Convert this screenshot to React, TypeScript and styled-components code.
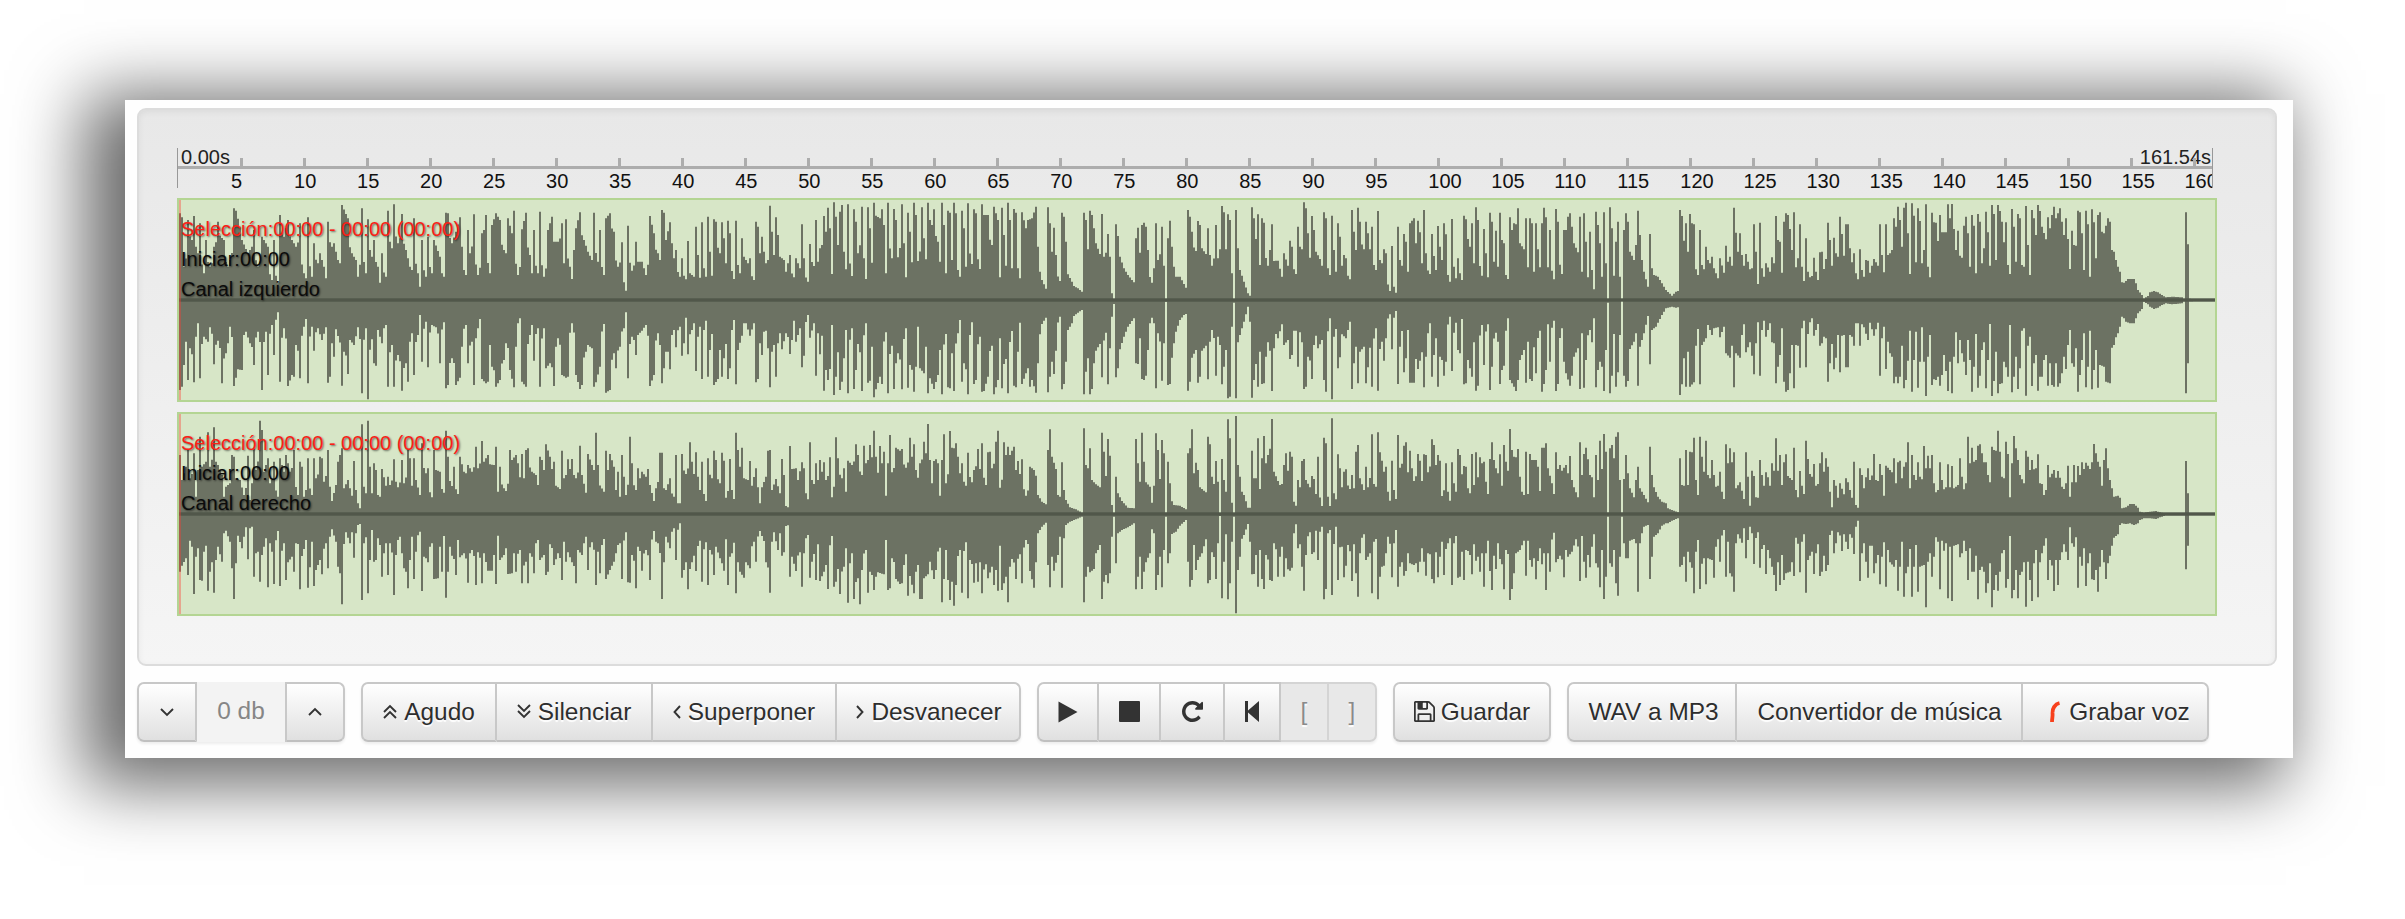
import React from 'react';
import styled, { createGlobalStyle, css } from 'styled-components';

const GlobalStyle = createGlobalStyle`
  body { margin: 0; background: #fff; }
  * { box-sizing: border-box; }
`;

const Page = styled.main`
  height: 919px;
  padding: 100px 112px 0 125px;
  overflow: hidden;
  font-family: "Liberation Sans", Arial, sans-serif;
`;

const Window = styled.section`
  height: 658px;
  padding: 8px 16px 0 12px;
  background: #fefefe;
  box-shadow: -24px 11px 66px 17px rgba(0, 0, 0, 0.58);
`;

const Well = styled.div`
  display: flex;
  flex-direction: column;
  gap: 10px;
  height: 558px;
  padding: 38px 0 0 38px;
  border: 2px solid #dcdcdc;
  border-radius: 9px;
  background: linear-gradient(#e8e8e8, #f5f5f5);
  box-shadow: inset 0 2px 6px rgba(0, 0, 0, 0.06);
`;

const Ruler = styled.div`
  display: grid;
  grid-template-columns: 100%;
  width: 2036px;
  height: 40px;
  overflow-x: clip;
  overflow-y: visible;
  border: solid #989898;
  border-width: 0 1px;
  font-size: 20px;
  line-height: 18px;
  color: #222;
  > * { grid-area: 1 / 1; }
`;

const RulerEnds = styled.div`
  display: flex;
  justify-content: space-between;
  height: 21px;
  padding: 0 1px 0 3px;
  border-bottom: 3px solid #adadad;
`;

const Marks = styled.div`
  display: flex;
  padding: 10px 0 0 53px;
`;

const Mark = styled.div`
  flex: 0 0 63.02px;
  color: #111;
  &::before {
    content: "";
    display: block;
    width: 3px;
    height: 10px;
    margin: 0 0 4px 9px;
    background: #adadad;
  }
`;

const Track = styled.div`
  display: grid;
  width: 2040px;
  height: 204px;
  border: 2px solid #b4d593;
  background: #d7e6c7;
  > * { grid-area: 1 / 1; }
`;

const Cursor = styled.div`
  width: 2px;
  background: rgba(255, 60, 50, 0.38);
`;

const Caption = styled.div`
  padding: 14px 0 0 2px;
  font-size: 20px;
  line-height: 30px;
  color: #0b0b0b;
  text-shadow: 1px 1px 2px rgba(0, 0, 0, 0.55);
`;

const Selection = styled.div`
  color: #fb2016;
`;

const Toolbar = styled.div`
  display: flex;
  gap: 16px;
  margin-top: 16px;
`;

const Group = styled.div`
  display: flex;
  height: 60px;
  border-radius: 7px;
  box-shadow: 0 2px 3px rgba(0, 0, 0, 0.07);
`;

const Button = styled.button<{ $w: number; $disabled?: boolean; $gap?: number; $indent?: number }>`
  display: flex;
  align-items: center;
  justify-content: center;
  gap: ${p => p.$gap ?? 7}px;
  width: ${p => p.$w}px;
  height: 60px;
  padding: 0 0 1px ${p => p.$indent ?? 0}px;
  border: 2px solid #c8c8c8;
  border-bottom-color: #c0c0c0;
  border-left-width: 0;
  background: linear-gradient(#fff, #e0e0e0);
  font: 24.4px "Liberation Sans", Arial, sans-serif;
  white-space: nowrap;
  color: #2e2e2e;
  text-shadow: 0 2px 1px #fff;
  &:first-child { border-left-width: 2px; border-radius: 7px 0 0 7px; }
  &:last-child { border-radius: 0 7px 7px 0; }
  &:only-child { border-radius: 7px; }
  ${p => p.$disabled && css`
    background: #e8e8e8;
    border-color: #d4d4d4;
    color: #8a8a8a;
  `}
`;

const Level = styled.div`
  width: 90px;
  border-right: 2px solid #c8c8c8;
  background: #f3f3f3;
  text-align: center;
  font-size: 24.4px;
  line-height: 57px;
  color: #868686;
`;

const Glyph = styled.svg`
  display: block;
  flex: none;
  fill: none;
  stroke: #333;
  stroke-width: 1.9;
`;

const Solid = styled(Glyph)`
  fill: #333;
  stroke: none;
`;

/* Peak outlines, four stretches per channel. Each stretch gives its first
   pixel, its zero level and "x,y" points at 2.8 x 3 units per pixel. */
type Stretch = { x0: number; zero: number; top: string; bottom: string };

const LEFT: Stretch[] = [
  {
    x0: 100, zero: 660,
    top: '222,400 229,412 236,560 247,420 256,480 263,408 272,520 280,430 290,580 297,480 306,560 320,500 330,425 345,480 358,560 376,385 381,392 393,440 400,480 412,520 424,500 431,450 443,560 455,470 470,500 480,600 487,480 497,610 504,405 515,470 525,420 537,480 548,500 559,430 570,580 576,595 583,412 594,590 600,490 610,550 615,520 626,560 632,595 638,425 650,500 655,490 668,540 672,550 678,375 694,415 705,520 716,540 723,590 734,385 744,580 750,418 762,530 768,480 778,560 784,608 790,520 800,590 807,392 818,505 823,373 835,490 845,402 857,510 866,560 873,570 879,415 890,580 896,620 902,480 912,590 918,470 929,580 935,480 950,530 963,590 969,398 974,400 985,490 997,455 1008,412 1014,500 1022,585 1030,450 1038,520 1047,403 1058,585 1069,460 1080,405 1092,580 1097,435 1108,400 1119,420 1131,510 1136,520 1143,415 1153,460 1159,392 1170,585 1181,448 1192,398 1203,525 1209,580 1215,450 1226,580 1232,395 1243,590 1254,450 1265,410 1271,485 1282,485 1293,430 1299,550 1305,418 1315,560 1321,597 1327,510 1333,445 1344,397 1355,480 1366,515 1378,540 1383,398 1394,545 1400,450 1411,585 1416,415 1428,400 1439,455 1450,515 1453,560 1462,487 1473,632 1479,437 1490,572 1500,485 1507,545 1518,545 1529,585 1540,408 1552,460 1563,520',
    bottom: '222,930 229,920 235,855 241,785 247,900 254,805 263,907 269,770 275,730 280,895 290,770 302,785 308,742 320,853 330,782 341,910 350,820 358,790 364,740 376,918 387,868 396,870 404,765 410,755 420,790 431,855 443,755 453,930 465,755 471,885 481,735 487,825 498,697 504,905 515,745 526,918 537,885 543,890 549,795 560,895 571,740 577,717 583,910 594,740 600,812 610,745 622,780 633,742 638,908 645,890 650,790 655,830 661,748 678,917 684,815 695,882 700,780 712,795 723,742 733,940 744,745 751,958 761,778 767,850 773,857 779,750 790,790 801,735 807,920 816,795 823,920 835,825 846,932 857,850 863,905 873,760 879,885 890,765 896,705 902,845 912,725 918,862 930,735 941,742 952,850 963,727 969,925 975,915 985,835 997,915 1008,893 1014,800 1023,735 1033,850 1042,785 1047,915 1058,745 1064,717 1069,897 1080,910 1085,905 1092,795 1098,860 1109,920 1120,900 1131,840 1137,790 1148,870 1159,922 1165,800 1176,715 1181,905 1193,920 1204,765 1209,735 1215,842 1226,745 1232,920 1243,745 1249,865 1260,850 1271,918 1281,775 1293,885 1305,893 1310,890 1321,730 1333,885 1344,927 1350,915 1360,815 1367,795 1378,805 1383,920 1389,907 1400,860 1411,732 1417,938 1428,930 1439,820 1445,865 1456,800 1467,745 1473,697 1479,895 1490,770 1501,825 1507,765 1518,752 1529,735 1540,918 1552,885 1563,760',
  },
  {
    x0: 660, zero: 360,
    top: '0,240 5,90 11,98 17,180 28,127 34,190 40,235 45,210 56,290 61,235 72,298 79,183 85,280 95,290 101,140 107,225 112,293 118,127 124,265 129,290 135,110 141,215 146,287 151,118 158,125 167,220 173,127 179,175 185,250 190,122 196,160 207,297 213,122 219,255 224,280 230,175 235,230 247,250 252,235 263,300 269,125 275,140 280,220 286,170 292,215 298,250 303,240 308,77 314,155 320,225 325,112 331,165 337,230 347,240 353,275 364,225 375,292 381,235 392,265 398,133 404,235 415,305 420,192 431,258 437,120 443,245 448,205 454,195 459,108 465,155 471,83 476,145 482,282 487,67 493,110 499,195 504,95 510,75 515,215 521,268 527,73 537,288 543,88 549,125 555,220 566,80 571,235 577,297 583,82 588,145 594,248 599,68 605,107 616,115 622,88 627,135 633,280 639,68 650,235 656,87 661,120 667,232 678,73 683,190 689,292 695,98 700,155 706,247 711,68 717,105 723,243 734,82 740,175 745,238 750,68 756,120 762,135 768,88 779,185 784,245 790,68 796,135 801,280 807,92 812,98 818,240 823,68 829,100 835,270 840,290 846,92 852,145 857,260 863,70 874,252 880,88 885,100 896,267 902,73 908,105 919,105 930,195 935,80 946,120 952,292 957,83 963,165 968,257 974,68 980,120 986,265 991,87 997,98 1003,265 1008,295 1014,97 1025,145 1031,120 1042,115 1053,80 1059,200 1064,275 1070,300 1082,326 1087,82 1092,130 1098,215 1104,143 1110,225 1120,303 1126,98 1131,110 1137,185 1143,283 1154,305 1160,318 1171,325 1183,335 1187,98 1192,120 1198,208 1204,92 1210,105 1216,145 1222,190 1233,222 1238,102 1244,230 1255,162 1261,230 1267,340 1272,358 1277,133 1283,168 1289,230 1300,265 1312,285 1328,307 1334,175 1339,143 1345,218 1351,135 1356,128 1362,140 1368,210 1378,308 1384,265 1390,130 1395,240 1406,140 1412,257 1417,358 1423,175 1429,122 1434,200 1440,260 1446,290 1457,290 1465,312 1475,323 1479,90 1485,110 1490,155 1501,213 1507,123 1513,135 1518,205 1530,222 1535,145 1541,225 1547,257 1558,135 1563,235',
    bottom: '0,495 5,610 11,565 17,515 23,515 28,568 34,465 40,450 45,502 56,440 61,527 67,490 73,413 79,523 90,450 96,430 101,573 107,470 112,440 118,597 124,450 129,422 135,590 141,510 146,462 151,615 163,597 167,510 173,590 179,535 185,492 190,597 196,565 202,450 207,420 213,613 219,510 230,467 235,430 241,430 252,467 263,430 269,607 275,597 280,490 286,525 292,455 298,452 303,505 308,622 314,515 320,495 325,590 331,490 337,460 342,508 353,460 364,522 370,480 375,422 381,485 392,445 398,562 404,527 415,405 420,473 431,430 437,587 443,460 448,523 454,467 459,632 465,570 471,600 476,567 482,435 487,645 493,590 499,517 504,630 510,605 515,535 521,450 527,640 537,445 543,627 549,570 555,492 566,633 577,430 583,608 588,602 594,500 599,652 605,628 616,590 622,612 633,457 639,640 650,497 656,627 661,550 667,520 678,628 689,445 695,623 700,555 711,635 717,560 723,440 728,565 740,580 745,500 750,640 756,595 768,627 779,585 784,510 790,643 801,462 807,622 812,625 818,520 823,633 835,460 840,420 846,605 852,550 857,568 863,643 874,427 880,612 885,600 896,470 902,635 908,633 919,590 930,497 935,643 946,600 952,475 957,625 968,537 974,640 986,453 991,617 997,622 1003,515 1008,428 1014,612 1025,580 1031,565 1036,620 1042,600 1053,638 1059,550 1064,463 1070,432 1082,413 1087,637 1092,590 1098,545 1104,582 1110,512 1120,410 1126,628 1131,612 1137,545 1143,450 1154,430 1160,408 1171,398 1183,390 1187,643 1192,575 1198,535 1204,643 1210,627 1216,550 1222,512 1233,492 1238,592 1249,458 1255,613 1261,505 1267,410 1272,372 1277,592 1283,565 1289,508 1300,470 1312,440 1328,415 1334,550 1339,552 1345,475 1351,597 1356,600 1362,587 1368,510 1378,413 1384,430 1390,625 1395,460 1406,602 1412,490 1417,365 1423,615 1429,612 1434,533 1440,490 1446,455 1457,420 1465,405 1475,402 1479,632 1485,605 1490,533 1501,510 1507,608 1513,590 1518,512 1530,497 1535,598 1541,485 1547,450 1558,587 1563,470',
  },
  {
    x0: 1220, zero: 360,
    top: '5,78 11,97 17,208 22,103 28,120 34,280 39,358 45,90 51,205 56,270 67,305 78,340 84,347 90,82 95,115 101,177 107,103 112,255 118,115 124,128 135,257 141,210 146,133 152,243 163,242 174,290 180,220 191,257 196,182 202,200 213,282 219,140 225,200 230,208 235,67 241,85 247,160 252,233 258,108 264,150 270,215 281,237 286,257 292,97 298,115 303,265 308,285 314,107 320,210 326,275 331,130 337,170 342,257 348,225 353,235 364,298 370,90 376,155 381,210 387,83 393,125 404,208 409,125 415,160 420,208 426,140 432,255 437,270 443,93 448,240 454,250 460,208 466,220 476,333 482,198 488,320 493,338 499,140 505,240 510,257 516,162 521,185 527,275 533,130 544,115 549,190 555,122 560,157 566,250 572,90 578,220 586,282 594,162 600,228 605,270 611,138 617,200 622,240 628,130 634,163 639,285 645,305 650,117 656,260 661,295 667,235 672,280 678,300 684,107 690,118 695,177 701,200 706,130 712,250 717,82 723,120 734,287 740,147 745,220 751,292 757,98 762,125 768,245 773,152 779,260 785,98 790,180 796,190 802,285 807,297 813,112 818,150 824,130 830,133 835,85 841,190 852,208 857,115 863,262 869,115 874,130 880,275 886,130 891,208 897,262 902,130 908,83 914,112 919,262 925,150 936,298 942,87 947,125 958,282 964,150 970,150 975,110 981,100 986,140 992,190 1003,217 1009,110 1014,275 1020,100 1025,185 1031,292 1037,155 1042,270 1048,328 1053,95 1059,135 1065,190 1070,290 1076,97 1081,250 1087,358 1093,82 1098,145 1104,287 1110,185 1115,125 1121,290 1126,358 1132,150 1138,100 1143,125 1149,215 1160,240 1166,195 1171,92 1177,165 1183,240 1188,275 1199,320 1205,162 1211,265 1217,285 1228,290 1240,310 1250,330 1265,347 1277,335 1284,333 1289,90 1294,108 1300,182 1306,130 1311,215 1317,102 1323,130 1328,133 1334,268 1339,285 1345,150 1351,255 1357,268 1362,200 1368,240 1373,250 1379,230 1385,265 1396,295 1402,235 1412,278 1418,197 1424,245 1430,230 1435,257 1440,83 1446,158 1452,215 1457,160 1463,225 1469,257 1475,222 1486,268 1491,265 1497,133 1502,215 1508,312 1513,128 1519,265 1524,290 1530,250 1541,275 1547,232 1552,250 1558,108 1564,180',
    bottom: '5,613 11,560 17,510 22,655 28,650 34,440 39,368 45,655 51,487 56,465 67,425 78,380 84,425 90,653 95,600 101,552 107,620 112,515 118,612 124,610 129,530 135,487 146,633 152,505 157,462 163,475 174,433 180,495 191,480 196,537 202,525 207,452 213,452 219,560 225,457 235,627 241,620 247,530 258,597 264,495 270,467 275,505 286,480 292,600 298,635 308,415 314,658 320,470 326,447 331,565 337,532 342,463 353,475 364,425 370,627 376,550 381,500 387,610 393,515 404,500 409,610 415,562 420,503 426,620 437,445 443,632 448,507 454,485 460,542 466,475 476,403 482,508 493,393 499,612 505,500 510,453 516,577 521,535 527,450 533,608 544,608 549,537 555,567 566,517 572,622 578,530 583,460 589,430 594,590 600,525 605,475 611,620 617,530 628,587 634,545 645,410 650,573 656,458 661,428 667,510 673,520 678,417 684,613 690,610 695,540 706,590 712,487 717,632 723,617 734,435 740,555 751,433 757,630 762,560 773,458 785,612 790,570 796,557 802,452 807,415 813,600 824,620 830,633 835,600 841,540 852,510 857,608 863,485 869,597 874,603 880,502 886,580 897,452 902,635 908,612 914,570 919,433 925,545 936,422 942,633 947,612 958,445 964,545 970,580 981,617 986,587 992,530 1003,505 1009,627 1014,460 1020,623 1025,540 1037,450 1042,487 1048,415 1053,622 1059,570 1065,545 1076,633 1081,510 1087,368 1093,640 1098,587 1104,462 1110,620 1115,577 1121,465 1126,360 1132,587 1138,620 1143,603 1149,507 1160,485 1166,460 1171,617 1177,500 1188,460 1199,408 1205,553 1211,450 1222,440 1240,405 1250,385 1265,380 1277,383 1284,382 1289,645 1294,613 1300,535 1306,620 1311,515 1317,620 1328,607 1334,497 1339,447 1345,613 1351,495 1362,475 1368,435 1379,465 1385,445 1396,442 1402,472 1412,440 1418,520 1430,533 1435,497 1440,622 1446,520 1457,533 1463,465 1469,433 1475,517 1486,487 1491,527 1497,583 1502,490 1508,427 1513,587 1519,450 1524,422 1530,470 1541,430 1547,487 1552,490 1558,610 1564,560',
  },
  {
    x0: 1780, zero: 660,
    top: '0,485 6,578 11,425 17,400 23,405 28,447 34,510 40,397 45,562 51,535 56,433 62,560 68,603 73,475 78,575 84,592 90,588 96,533 101,575 107,600 112,517 118,515 123,567 129,537 135,428 140,480 146,557 152,473 163,530 168,410 174,462 180,527 185,433 191,433 197,505 202,547 207,520 213,580 219,598 225,508 230,570 236,590 242,540 247,542 253,578 264,537 275,557 281,433 286,525 292,577 298,433 303,525 309,520 314,510 320,415 325,440 331,380 337,420 342,500 348,383 353,368 359,460 364,582 370,370 376,407 382,547 387,385 393,423 398,550 404,510 409,373 415,560 420,592 426,398 432,427 438,428 443,483 449,405 455,457 462,457 471,373 477,415 482,372 488,447 494,510 499,452 505,527 510,533 516,437 521,410 527,460 533,560 538,405 544,437 549,580 555,402 561,425 566,550 572,505 577,395 583,457 588,557 594,375 600,402 605,540 611,375 617,393 622,425 628,487 634,427 645,582 650,387 656,440 662,545 667,402 673,415 678,555 684,560 690,378 695,495 701,585 706,390 712,415 718,465 724,375 730,393 735,440 745,478 751,412 757,445 763,405 768,380 774,415 785,385 791,425 797,465 802,415 808,477 813,567 819,452 824,495 830,497 835,392 841,397 847,460 852,570 858,392 863,433 869,590 875,388 880,427 886,535 892,405 897,397 903,455 908,460 914,437 920,415 926,425 930,510 937,515 942,540 948,560 954,575 960,607 965,608 971,603 976,597 990,597 998,610 1005,630 1012,645 1020,656 1030,648 1038,637 1048,633 1060,637 1070,645 1083,652 1100,650 1125,652 1130,657 1134,657 1137,397 1142,493 1147,656 1160,658 1218,658',
    bottom: '0,825 6,745 11,905 17,935 23,930 28,880 34,795 40,925 45,795 51,797 56,863 62,745 68,722 73,862 78,762 84,727 90,715 96,767 101,750 107,732 112,797 118,790 123,770 129,775 135,905 140,850 146,792 152,868 157,833 163,765 168,877 174,767 180,765 185,862 191,862 197,765 202,770 207,797 213,730 219,730 225,797 230,733 236,742 247,780 253,728 264,767 275,728 281,887 286,775 292,740 298,867 303,785 309,820 314,830 320,910 325,890 331,910 337,890 342,797 348,925 353,900 359,842 364,752 370,935 376,840 382,755 387,923 393,845 398,742 404,845 409,948 415,830 420,765 426,915 432,898 438,900 443,890 449,917 455,885 460,825 466,873 471,933 477,845 482,940 488,830 494,757 499,850 505,780 510,820 516,845 521,885 527,780 533,840 538,935 544,860 549,762 555,923 561,887 566,810 572,787 577,925 583,840 588,732 594,948 600,903 605,815 611,940 617,912 622,910 628,845 634,862 639,890 645,735 650,937 656,890 662,830 667,927 673,865 678,752 684,745 690,947 695,797 701,770 706,918 712,850 718,825 724,932 730,890 735,890 741,840 745,825 751,917 757,850 763,915 768,920 774,850 780,920 785,910 791,880 797,830 802,867 808,795 813,750 819,850 824,860 830,805 835,935 841,885 847,840 852,760 858,922 863,860 869,752 875,928 880,870 886,810 892,923 897,855 908,860 914,905 925,910 930,803 937,795 942,772 948,760 954,740 960,710 965,715 971,725 980,730 990,730 998,715 1005,700 1012,687 1020,665 1030,673 1038,680 1048,687 1060,683 1070,675 1083,670 1100,673 1125,670 1130,664 1134,664 1137,940 1142,850 1147,664 1160,663 1218,663',
  },
];

const RIGHT: Stretch[] = [
  {
    x0: 160, zero: 342,
    top: '56,165 62,240 73,200 79,150 84,235 95,160 101,290 107,210 113,110 118,200 129,185 135,97 141,200 152,82 158,185 163,195 174,225 180,290 186,260 196,250 203,165 208,170 214,235 225,240 236,285 247,167 253,300 258,250 264,145 270,210 280,62 286,90 292,215 303,175 308,250 320,185 330,290 336,175 347,215 353,165 364,215 376,150 386,285 393,185 398,200 404,290 415,175 426,285 432,175 438,235 449,170 454,175 460,245 471,150 476,260 482,303 493,255 499,185 510,145 515,265 527,240 532,265 537,287 543,183 549,270 555,310 560,325 566,73 571,260 577,280 583,62 588,200 593,280 599,190 605,210 610,285 616,290 622,207 632,257 639,230 644,255 655,178 661,245 667,262 678,180 683,250 694,150 700,175 706,257 711,175 717,240 728,285 734,130 745,220 751,205 762,292 768,150 774,210 785,215 796,278 801,92 807,170 818,258 824,200 835,282 841,170 852,215 857,220 863,195 874,215 885,140 891,205 902,123 907,185 919,165 924,193 935,195 941,140 947,275 952,200 963,265 969,273 980,150 986,180 997,165 1003,190 1008,232 1014,162 1019,235 1025,150 1031,145 1042,215 1053,225 1059,255 1064,170 1070,180 1075,210 1081,133 1092,170 1098,207 1104,185 1109,257 1120,267 1126,152 1132,235 1143,178 1148,207 1154,177 1165,235 1176,137 1182,225 1193,278 1199,162 1210,195 1215,210 1221,98 1227,195 1243,275 1249,152 1255,210 1260,162 1272,200 1277,270 1283,215 1288,290 1294,165 1300,230 1305,285 1316,110 1322,190 1333,270 1339,205 1345,235 1350,215 1361,230 1367,207 1373,255 1384,303 1389,265 1400,158 1406,158 1412,265 1417,270 1428,235 1440,290 1445,165 1451,310 1456,310 1462,162 1473,222 1484,127 1490,185 1495,222 1501,157 1507,230 1513,270 1518,185 1529,303 1535,175 1546,235 1552,152 1557,180',
    bottom: '56,515 62,497 73,475 79,525 84,422 90,440 95,582 101,470 107,445 113,540 118,542 129,437 135,572 141,515 146,487 152,578 158,480 163,440 174,485 180,400 186,392 196,425 202,505 208,597 214,490 219,407 230,445 236,410 241,382 247,478 253,385 258,380 264,530 270,460 275,455 280,545 286,465 297,415 303,562 308,430 314,455 320,552 330,393 336,558 347,430 353,540 358,487 370,470 376,515 382,430 387,432 393,568 404,447 409,420 415,563 421,502 426,425 432,558 438,510 449,480 454,523 465,430 471,505 476,410 482,388 493,425 499,500 510,613 515,432 521,397 532,430 537,397 543,473 549,400 555,375 560,372 566,600 571,430 577,412 583,580 588,480 593,390 599,485 605,480 610,415 622,530 627,460 632,430 639,525 644,430 655,585 661,465 672,410 678,460 683,505 694,565 700,480 706,410 711,537 717,455 728,395 734,573 740,470 745,475 751,487 762,430 768,537 779,535 785,440 790,515 796,408 801,593 807,515 812,440 818,467 830,525 835,420 841,472 852,460 863,548 868,460 874,450 885,555 891,457 902,550 907,460 919,512 930,512 935,465 941,552 947,407 952,480 963,465 969,445 975,522 986,520 991,460 997,515 1008,450 1014,550 1025,485 1031,550 1036,460 1047,520 1053,430 1059,420 1064,480 1075,465 1081,525 1087,515 1092,433 1104,495 1115,460 1126,540 1132,425 1137,485 1143,457 1154,487 1165,550 1171,450 1182,465 1187,430 1193,410 1199,510 1210,427 1221,555 1227,455 1232,520 1243,417 1249,537 1260,510 1272,485 1283,435 1288,430 1294,537 1305,397 1311,547 1316,548 1322,465 1333,565 1339,440 1350,512 1361,450 1372,540 1384,393 1389,425 1395,430 1406,597 1412,487 1417,410 1428,445 1440,385 1445,480 1456,370 1462,533 1473,487 1479,568 1484,507 1495,467 1501,513 1513,422 1518,545 1529,427 1535,555 1540,450 1552,525 1557,440',
  },
  {
    x0: 720, zero: 342,
    top: '0,250 5,158 11,182 17,293 28,177 34,270 39,297 45,98 50,150 56,200 62,143 67,235 78,240 84,183 90,257 101,205 107,262 112,310 118,262 129,230 135,152 141,150 146,270 157,237 168,280 174,177 180,225 185,318 191,322 196,138 202,207 213,205 219,240 230,187 235,205 241,280 247,298 252,127 258,240 264,252 269,190 275,240 280,180 286,215 291,187 297,240 309,172 314,292 325,112 331,175 342,235 348,205 353,275 359,182 370,195 381,133 387,165 398,225 404,137 409,190 420,135 426,172 432,92 437,170 443,218 448,138 454,190 460,155 465,287 471,190 477,105 482,217 493,143 504,152 510,147 521,203 532,113 538,170 543,133 549,210 555,233 560,190 571,125 577,160 583,72 588,180 594,250 599,183 605,178 611,190 616,287 622,180 628,103 633,250 644,93 650,143 655,145 661,130 667,170 672,220 678,190 689,257 695,158 706,247 711,210 722,147 728,207 734,130 745,255 751,157 756,155 762,205 773,125 779,92 784,263 795,127 801,165 807,140 812,165 824,140 829,210 835,183 841,222 846,178 857,287 868,200 880,210 885,227 891,285 900,305 914,313 919,150 924,88 930,170 941,207 947,285 952,290 958,187 964,270 970,300 980,322 995,328 1014,338 1020,85 1025,195 1031,205 1037,145 1042,240 1053,253 1065,262 1070,98 1076,155 1081,228 1087,117 1093,167 1098,315 1104,340 1109,230 1115,280 1126,303 1140,323 1160,325 1165,117 1171,190 1176,245 1182,98 1188,185 1193,247 1204,260 1210,308 1216,257 1221,100 1227,150 1232,237 1238,120 1244,160 1249,338 1255,185 1261,250 1272,315 1289,317 1305,328 1311,160 1317,145 1322,88 1328,220 1333,188 1339,210 1344,262 1361,277 1367,110 1373,133 1378,230 1384,252 1389,183 1395,245 1400,340 1406,177 1412,240 1417,275 1423,58 1429,115 1434,308 1440,340 1445,48 1451,195 1456,230 1468,285 1479,323 1485,323 1490,152 1496,235 1501,235 1507,115 1513,267 1518,175 1524,108 1530,190 1535,165 1546,57 1552,215 1563,243',
    bottom: '0,475 5,490 11,512 17,418 22,555 28,470 34,460 39,428 45,580 50,487 56,515 67,533 73,487 84,505 96,425 101,485 112,393 123,423 129,487 141,578 146,425 152,397 163,450 168,400 174,467 180,457 185,378 191,376 196,530 202,470 213,513 224,457 230,560 235,460 247,405 252,533 258,485 264,462 269,540 275,433 280,543 291,515 297,495 303,567 314,408 320,560 325,545 331,507 337,582 348,500 353,445 359,608 364,490 370,460 376,597 387,535 393,613 398,510 409,450 415,578 420,515 432,570 437,530 443,517 460,523 465,420 471,570 477,565 482,475 493,537 504,552 510,550 515,495 521,463 527,587 532,528 543,580 549,515 555,495 560,597 566,597 571,535 583,523 588,485 599,537 605,510 616,443 622,607 628,537 633,450 639,540 644,600 650,545 655,617 661,555 672,450 678,578 689,427 695,595 700,480 711,548 717,490 722,545 728,487 734,580 745,493 751,535 762,500 768,555 773,510 779,572 784,437 790,570 801,530 807,607 812,500 818,477 829,537 840,463 846,550 857,420 863,432 868,513 880,563 885,487 891,400 900,380 914,368 919,495 924,562 930,470 935,512 947,465 952,410 958,563 964,415 970,375 980,365 995,358 1014,350 1020,607 1025,530 1031,500 1037,517 1048,507 1059,450 1065,435 1070,597 1076,545 1081,525 1087,550 1093,520 1098,410 1104,350 1109,490 1115,400 1126,390 1140,382 1160,370 1165,568 1171,530 1176,470 1182,567 1188,515 1193,487 1204,460 1210,388 1216,400 1221,570 1227,525 1232,470 1238,562 1244,450 1249,350 1255,490 1261,460 1266,402 1278,395 1289,377 1305,360 1311,485 1317,560 1322,540 1328,435 1333,510 1339,480 1350,460 1361,418 1367,550 1373,540 1378,457 1389,537 1395,430 1400,348 1406,595 1412,485 1417,403 1423,598 1429,550 1434,425 1440,350 1445,640 1451,510 1456,470 1468,405 1479,372 1485,425 1490,523 1496,522 1501,465 1507,560 1513,450 1518,537 1524,567 1530,465 1541,540 1546,543 1552,430 1563,530',
  },
  {
    x0: 1280, zero: 342,
    top: '0,255 5,252 11,195 17,160 22,212 28,155 34,170 39,305 45,317 50,240 56,262 62,183 67,177 73,240 84,262 90,228 96,237 101,282 107,170 118,318 123,113 129,130 135,290 141,318 146,55 152,280 157,298 163,163 168,205 174,262 180,215 185,208 196,267 202,225 207,265 213,155 219,135 225,235 236,270 241,200 247,262 258,103 264,252 270,260 275,97 281,157 286,182 292,215 297,200 303,275 308,302 314,182 320,270 325,297 331,105 337,203 347,137 353,127 359,217 364,152 370,205 376,243 387,162 393,182 398,243 404,163 409,165 415,217 426,118 432,135 437,195 443,165 449,182 454,288 465,190 471,275 477,302 482,187 488,250 493,275 499,147 505,165 510,223 516,198 521,200 527,265 533,280 538,162 544,255 549,157 555,232 561,172 567,190 572,185 578,245 583,282 589,177 594,127 600,180 605,205 611,220 617,163 622,257 628,135 634,185 639,212 645,87 650,150 656,170 661,172 667,147 673,230 684,285 689,155 695,282 701,162 706,180 717,180 723,200 729,273 734,143 740,143 745,130 751,205 762,250 768,282 773,157 779,207 785,195 790,212 802,195 807,220 813,168 818,240 824,262 835,292 841,127 846,225 852,162 857,143 863,178 869,225 875,232 880,292 886,165 891,240 897,122 902,207 908,102 913,155 919,338 925,145 930,135 936,175 942,110 947,97 952,240 958,338 964,237 970,165 975,220 981,265 992,292 997,240 1003,200 1009,265 1020,285 1031,307 1037,140 1042,225 1048,262 1060,290 1071,305 1082,310 1088,325 1100,330 1115,337 1120,175 1126,255 1132,257 1138,150 1143,255 1149,155 1155,157 1160,113 1166,240 1171,285 1177,110 1182,170 1188,215 1194,122 1200,225 1205,235 1211,180 1216,225 1222,260 1228,257 1233,215 1239,275 1244,297 1249,133 1255,190 1261,145 1267,187 1272,157 1278,265 1289,247 1300,297 1305,157 1311,230 1317,317 1323,212 1328,228 1334,292 1339,293 1345,180 1351,225 1356,257 1362,217 1368,232 1373,257 1379,190 1385,212 1390,115 1396,212',
    bottom: '0,470 5,440 11,530 17,475 22,508 28,512 34,503 39,400 45,373 50,445 56,433 62,500 67,572 73,465 84,397 90,462 96,457 101,392 107,480 112,395 118,380 123,598 129,567 135,400 141,390 146,585 152,432 157,380 163,540 168,442 174,440 180,532 185,497 191,435 202,543 207,433 213,520 219,590 225,460 236,403 241,480 252,460 258,580 264,425 270,417 275,598 281,530 286,500 292,497 297,460 303,410 314,532 320,430 325,390 331,560 337,500 342,487 348,527 353,513 359,460 364,490 376,495 381,490 387,517 393,485 398,445 404,485 409,527 415,460 420,463 426,537 432,550 437,457 443,532 449,470 454,425 460,525 471,430 477,415 482,555 488,430 493,408 499,533 505,530 510,455 516,540 521,450 527,453 538,523 544,433 549,482 555,470 561,515 567,460 572,560 578,460 583,422 589,513 594,570 600,467 605,507 611,430 617,477 628,568 634,450 639,462 645,600 650,567 656,520 661,460 673,450 684,422 689,527 695,422 701,480 706,500 712,475 717,538 723,483 729,445 734,493 740,460 745,570 751,460 757,515 768,398 773,487 785,467 796,532 802,450 807,470 818,455 830,418 841,543 846,408 852,485 857,533 863,465 869,502 875,440 880,403 886,490 897,562 902,450 908,597 913,530 919,350 925,490 930,500 936,450 942,550 947,587 952,470 958,350 964,430 970,475 975,475 981,422 992,417 997,430 1003,575 1009,430 1014,400 1020,380 1031,375 1037,537 1042,470 1048,410 1060,400 1071,377 1082,370 1088,370 1100,362 1115,355 1120,500 1126,495 1132,470 1138,545 1143,455 1149,487 1160,580 1166,455 1171,420 1177,567 1188,475 1194,553 1200,475 1211,480 1216,533 1222,440 1228,418 1233,485 1244,390 1249,530 1255,425 1261,520 1272,575 1278,430 1283,403 1294,428 1300,385 1305,475 1311,420 1317,380 1328,492 1339,397 1345,503 1356,435 1362,522 1368,450 1379,500 1385,525 1390,573 1396,487',
  },
  {
    x0: 1780, zero: 342,
    top: '0,165 6,255 11,187 17,163 22,228 34,240 40,143 45,270 51,292 56,213 62,257 68,282 73,122 79,177 84,222 90,230 96,192 101,257 107,252 112,190 118,157 123,215 129,175 135,200 140,275 146,322 152,240 157,257 163,293 168,250 180,283 185,235 191,247 202,293 207,185 213,315 219,323 225,205 230,225 236,265 242,232 247,205 253,240 264,162 269,240 275,243 281,192 286,225 292,287 298,197 309,210 314,217 320,175 325,250 331,187 337,182 342,235 348,200 353,187 359,127 364,265 370,165 376,225 382,240 387,187 393,230 398,238 404,138 409,205 415,167 420,205 426,165 432,250 438,277 443,270 449,187 455,240 460,268 466,262 471,193 477,262 482,198 488,265 499,255 505,175 510,230 516,268 521,250 527,110 533,190 538,143 544,185 549,180 555,137 561,133 566,160 572,187 577,187 583,225 588,247 594,140 600,150 605,152 611,92 617,155 622,230 628,235 634,125 639,162 645,292 650,190 656,108 662,145 667,180 673,225 684,250 690,152 695,170 701,210 706,180 712,208 718,205 724,163 730,250 735,252 741,285 745,270 751,195 757,232 768,210 774,233 780,213 785,233 791,260 797,267 802,250 808,197 813,290 819,247 824,195 830,247 835,198 841,225 847,187 852,207 858,188 869,207 875,187 880,132 886,160 892,185 897,200 903,257 908,180 914,145 920,205 926,240 930,265 937,290 948,287 954,293 960,325 971,322 980,312 992,312 1000,323 1010,335 1020,338 1035,335 1050,333 1065,337 1080,340 1125,341 1133,341 1137,183 1142,280 1147,341 1218,341',
    bottom: '0,555 6,465 11,540 17,520 28,515 34,487 40,528 45,413 56,517 62,425 68,403 73,578 79,480 90,455 96,522 101,460 107,433 112,528 118,515 123,467 129,513 135,495 140,405 146,392 152,460 157,430 163,397 174,453 180,403 191,447 197,403 207,462 213,380 219,362 225,543 230,460 236,430 242,485 247,533 253,437 258,437 264,520 269,490 275,465 281,553 286,470 292,427 298,560 303,450 309,487 320,500 325,480 331,572 337,500 342,425 348,590 353,520 359,500 364,447 370,590 376,500 382,435 387,575 393,500 404,495 409,622 415,485 420,460 426,530 432,470 438,412 443,425 449,568 455,422 460,452 466,430 471,595 477,440 482,603 488,437 499,433 505,472 510,460 516,422 521,453 527,540 533,445 538,515 544,515 549,467 555,598 561,510 566,500 572,515 577,578 583,550 588,490 594,622 600,570 605,525 611,572 617,515 622,460 628,450 634,563 639,537 645,408 650,595 656,570 662,510 667,595 673,525 678,515 684,487 690,620 695,485 701,540 706,603 712,490 718,450 724,592 730,487 735,460 745,415 751,540 757,480 768,573 774,480 780,555 785,480 791,457 797,433 802,455 808,480 813,382 819,430 824,440 830,412 835,563 841,470 847,497 852,445 858,558 863,490 869,460 875,538 880,540 886,510 892,575 897,500 903,450 908,487 914,537 920,490 926,467 930,437 937,413 948,403 954,375 960,370 971,372 980,370 992,375 1000,370 1010,360 1020,355 1035,355 1050,357 1065,352 1080,346 1125,346 1133,346 1137,508 1142,437 1147,345 1218,345',
  },
];

const COLUMNS = 1018;
const ORIGIN = 179;

/* Level of every two-pixel column; columns between two points take a level in between. */
function levels(stretches: Stretch[], side: 'top' | 'bottom'): number[] {
  const out: (number | undefined)[] = new Array(COLUMNS).fill(undefined);
  stretches.forEach(s => {
    s[side].split(' ').forEach(pair => {
      const [x, y] = pair.split(',').map(Number);
      const col = Math.floor((s.x0 + x / 2.8 - ORIGIN) / 2);
      const c = Math.max(0, Math.min(COLUMNS - 1, col));
      out[c] = Math.abs(y - s.zero) / 3;
    });
  });
  let last = 0;
  if (out[0] === undefined) out[0] = out.find(v => v !== undefined) ?? 0;
  for (let i = 1; i < COLUMNS; i++) {
    if (out[i] === undefined && i < COLUMNS - 1) continue;
    const a = out[last] as number;
    const b = out[i] ?? a;
    for (let j = last + 1; j <= i; j++) {
      if (j === i) { out[j] = b; continue; }
      const line = a + ((b - a) * (j - last)) / (i - last);
      const low = Math.min(a, b);
      out[j] = Math.abs(a - b) > 18 ? low + (line - low) * 0.35 : line;
    }
    last = i;
  }
  return out as number[];
}

function outline(stretches: Stretch[]): string {
  const up = levels(stretches, 'top').map((v, i) => `L${i * 2} ${(100 - v).toFixed(1)}h2`);
  const down = levels(stretches, 'bottom').map((v, i) => `L${i * 2 + 2} ${(100 + v).toFixed(1)}h-2`);
  return `M0 100${up.join('')}${down.reverse().join('')}Z`;
}

function Channel({ data, name }: { data: Stretch[]; name: string }) {
  return (
    <Track>
      <svg width="2036" height="200" viewBox="0 0 2036 200">
        <path d={outline(data)} fill="#6c7263" />
        <rect x="0" y="98.3" width="2036" height="3.4" fill="#51574a" />
      </svg>
      <Cursor />
      <Caption>
        <Selection>Selección:00:00 - 00:00 (00:00)</Selection>
        <div>Iniciar:00:00</div>
        <div>{name}</div>
      </Caption>
    </Track>
  );
}

export default function App() {
  return (
    <Page>
      <GlobalStyle />
      <Window>
        <Well>
          <Ruler>
            <RulerEnds>
              <span>0.00s</span>
              <span>161.54s</span>
            </RulerEnds>
            <Marks>
              {Array.from({ length: 32 }, (_, i) => (
                <Mark key={i}>{(i + 1) * 5}</Mark>
              ))}
            </Marks>
          </Ruler>
          <Channel data={LEFT} name="Canal izquierdo" />
          <Channel data={RIGHT} name="Canal derecho" />
        </Well>
        <Toolbar>
          <Group>
            <Button $w={60}>
              <Glyph width="14" height="10" viewBox="0 0 14 10"><path d="M1 2l6 6 6-6" /></Glyph>
            </Button>
            <Level>0 db</Level>
            <Button $w={58}>
              <Glyph width="14" height="10" viewBox="0 0 14 10"><path d="M1 8l6-6 6 6" /></Glyph>
            </Button>
          </Group>
          <Group>
            <Button $w={136}>
              <Glyph width="14" height="16" viewBox="0 0 14 16"><path d="M1 8l6-6 6 6M1 14l6-6 6 6" /></Glyph>
              Agudo
            </Button>
            <Button $w={156}>
              <Glyph width="14" height="16" viewBox="0 0 14 16"><path d="M1 1l6 6 6-6M1 7l6 6 6-6" /></Glyph>
              Silenciar
            </Button>
            <Button $w={184}>
              <Glyph width="8" height="14" viewBox="0 0 8 14"><path d="M7 1L1.500 7l5.500 6" /></Glyph>
              Superponer
            </Button>
            <Button $w={184} $indent={2}>
              <Glyph width="8" height="14" viewBox="0 0 8 14"><path d="M1 1l5.500 6L1 13" /></Glyph>
              Desvanecer
            </Button>
          </Group>
          <Group>
            <Button $w={62}>
              <Solid width="20" height="22" viewBox="0 0 20 22"><path d="M0.500 0.500L19.500 11L0.500 21.500Z" /></Solid>
            </Button>
            <Button $w={62}>
              <Solid width="21" height="21" viewBox="0 0 21 21"><rect width="21" height="21" rx="1" /></Solid>
            </Button>
            <Button $w={64}>
              <Solid width="21" height="21" viewBox="0 128 1536 1536">
                <path d="M1536 256v448q0 26-19 45t-45 19h-448q-42 0-59-40-17-39 14-69l138-138q-148-137-349-137-104 0-198.500 40.500t-163.500 109.500-109.500 163.500-40.500 198.500 40.500 198.500 109.500 163.500 163.500 109.500 198.500 40.500q119 0 225-52t179-147q7-10 23-12 15 0 25 9l137 138q9 8 9.500 20.500t-7.500 22.500q-109 132-264 204.500t-327 72.500q-156 0-298-61t-245-164-164-245-61-298 61-298 164-245 245-164 298-61q147 0 284.500 55.500t244.500 156.500l130-129q29-31 70-14 39 17 39 59z" />
              </Solid>
            </Button>
            <Button $w={56}>
              <Solid width="14" height="21" viewBox="0 0 14 21"><path d="M0 0h3v9.500L14 0v21L3 11.500V21H0z" /></Solid>
            </Button>
            <Button $w={48} $disabled>[</Button>
            <Button $w={48} $disabled>]</Button>
          </Group>
          <Group>
            <Button $w={158} $gap={6}>
              <Solid width="21" height="21" viewBox="128 128 1536 1536">
                <path d="M512 1536h768v-384h-768v384zm896 0h128v-896q0-14-10-38.500t-20-34.500l-281-281q-10-10-34-20t-39-10v416q0 40-28 68t-68 28h-576q-40 0-68-28t-28-68v-416h-128v1280h128v-416q0-40 28-68t68-28h832q40 0 68 28t28 68v416zm-384-928v-320q0-13-9.500-22.500t-22.500-9.500h-192q-13 0-22.500 9.500t-9.500 22.500v320q0 13 9.500 22.500t22.500 9.500h192q13 0 22.500-9.500t9.500-22.500zm640 32v928q0 40-28 68t-68 28h-1344q-40 0-68-28t-28-68v-1344q0-40 28-68t68-28h928q40 0 88 20t76 48l280 280q28 28 48 76t20 88z" />
              </Solid>
              Guardar
            </Button>
          </Group>
          <Group>
            <Button $w={170} $indent={3}>WAV a MP3</Button>
            <Button $w={286} $indent={1}>Convertidor de música</Button>
            <Button $w={186} $gap={8} $indent={9}>
              <svg width="12" height="22" viewBox="0 0 12 22">
                <path d="M3 21C3 17 4 15 3.500 12C3 8 6 3 10.500 2" fill="none" stroke="#f7401c" strokeWidth="3.800" />
              </svg>
              Grabar voz
            </Button>
          </Group>
        </Toolbar>
      </Window>
    </Page>
  );
}
